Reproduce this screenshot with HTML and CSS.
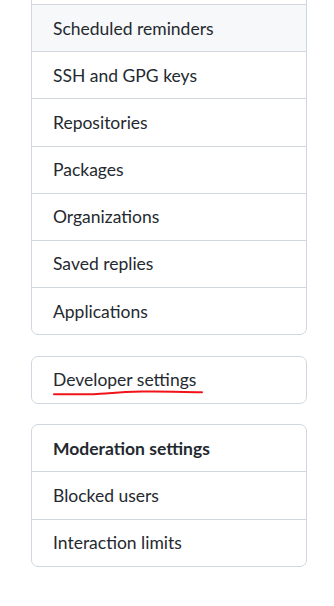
FILE: index.html
```html
<!DOCTYPE html>
<html>
<head>
<meta charset="utf-8">
<link rel="stylesheet" href="styles.css">
</head>
<body>
<div class="page">
  <nav class="menu menu-first">
    <a class="item" aria-hidden="true"></a>
    <a class="item active">Scheduled reminders</a>
    <a class="item">SSH and GPG keys</a>
    <a class="item">Repositories</a>
    <a class="item">Packages</a>
    <a class="item">Organizations</a>
    <a class="item">Saved replies</a>
    <a class="item">Applications</a>
  </nav>
  <nav class="menu">
    <a class="item dev">Developer settings<svg class="scribble" width="160" height="10" viewBox="0 0 160 10"><path d="M2 6.2 C 20 6.4, 35 6.6, 45 6 S 70 4, 90 3.6 S 130 3.8, 150 4.3" fill="none" stroke="#f0141a" stroke-width="2" stroke-linecap="round"/></svg></a>
  </nav>
  <nav class="menu">
    <div class="item heading">Moderation settings</div>
    <a class="item">Blocked users</a>
    <a class="item">Interaction limits</a>
  </nav>
</div>
</body>
</html>
```
FILE: styles.css
```css
html, body {
  margin: 0;
  padding: 0;
  background: #ffffff;
}
body {
  font-family: Lato, "Noto Sans", sans-serif;
  color: #24292f;
  overflow: hidden;
}
.page {
  width: 276px;
  margin-left: 31px;
  display: flex;
  flex-direction: column;
  gap: 20.5px;
  margin-top: -43px;
}
.menu {
  border: 1px solid #d0d7de;
  border-radius: 7px;
  display: flex;
  flex-direction: column;
  overflow: hidden;
}
.item {
  position: relative;
  display: flex;
  align-items: center;
  height: 46.15px;
  padding-left: 21px;
  font-size: 17.5px;
  color: #24292f;
  text-decoration: none;
}
.item + .item {
  border-top: 1px solid #d0d7de;
}
.active {
  background: #f6f8fa;
}
.heading {
  font-weight: 700;
}
.scribble {
  position: absolute;
  left: 20px;
  top: 31px;
}
```
